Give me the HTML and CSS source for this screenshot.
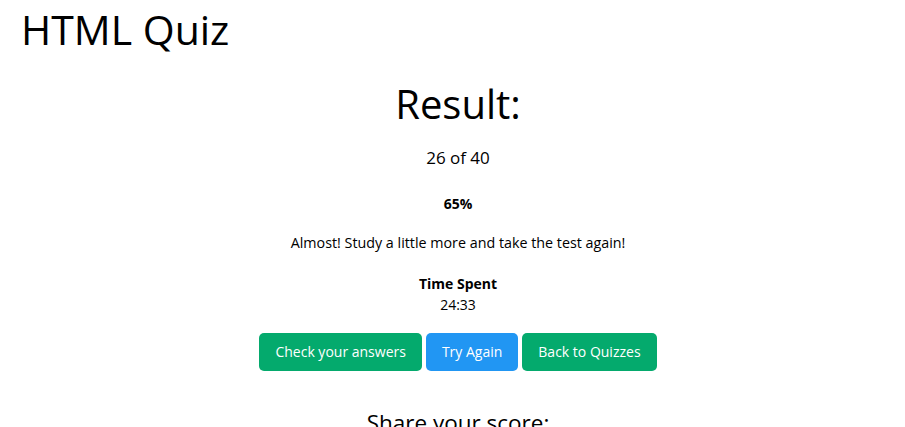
FILE: index.html
```html
<!DOCTYPE html>
<html>
<head>
<meta charset="utf-8">
<link rel="stylesheet" href="styles.css">
</head>
<body>
<h1 class="title">HTML Quiz</h1>
<div class="result">
  <h2 class="result-head">Result:</h2>
  <p class="score">26 of 40</p>
  <p class="percent">65%</p>
  <p class="msg">Almost! Study a little more and take the test again!</p>
  <p class="time"><b>Time Spent</b><br>24:33</p>
  <div class="buttons">
    <a class="btn green">Check your answers</a>
    <a class="btn blue">Try Again</a>
    <a class="btn green">Back to Quizzes</a>
  </div>
  <h3 class="share">Share your score:</h3>
</div>
</body>
</html>
```
FILE: styles.css
```css
html, body { margin: 0; padding: 0; background: #fff; color: #000; }
body { font-family: "Open Sans", sans-serif; font-size: 14px; line-height: 1.5; padding: 0 21px; overflow: hidden; height: 427px; }
.title { font-size: 41px; font-weight: 400; margin: 5px 0 0; line-height: 1.2; }
.result { text-align: center; padding-left: 11px; }
.result-head { font-size: 40px; font-weight: 400; margin: 26px 0 0; line-height: 1.2; }
.score { font-size: 17px; margin: 17px 0 0; }
.percent { font-weight: 700; margin: 22px 0 0; }
.msg { font-size: 14.3px; margin: 18px 0 0; }
.time { margin: 20px 0 0; }
.buttons { margin-top: 18px; display: flex; justify-content: center; gap: 4px; }
.btn { display: inline-block; color: #fff; padding: 0 16px; height: 38px; line-height: 38px; border-radius: 5px; font-size: 14px; }
.green { background: #04AA6D; }
.blue { background: #2196F3; }
.share { font-size: 22.5px; font-weight: 400; margin: 35px 0 0; }
```
